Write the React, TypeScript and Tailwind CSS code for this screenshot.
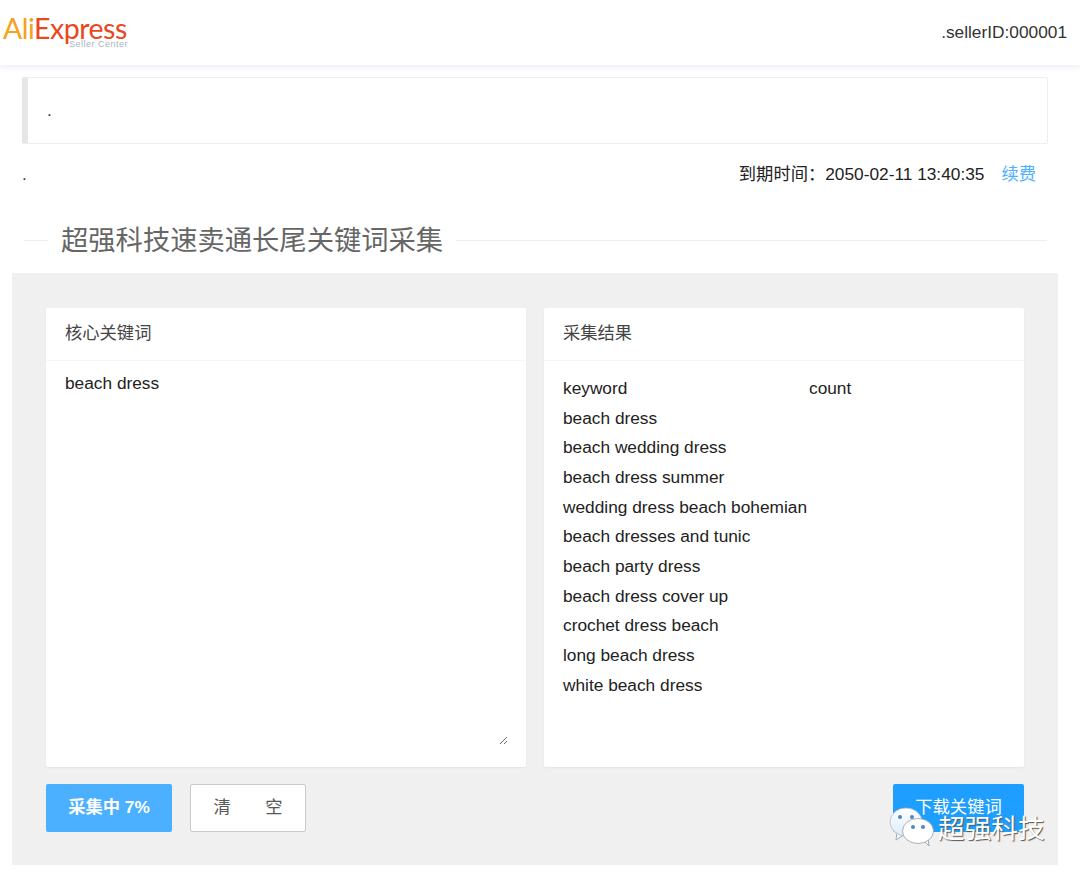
const font = '[font-family:"Liberation_Sans","Noto_Sans_CJK_SC",sans-serif]';

const keywords = [
  "beach dress",
  "beach wedding dress",
  "beach dress summer",
  "wedding dress beach bohemian",
  "beach dresses and tunic",
  "beach party dress",
  "beach dress cover up",
  "crochet dress beach",
  "long beach dress",
  "white beach dress",
];

function WechatIcon() {
  return (
    <svg width="46" height="40" viewBox="0 0 46 40">
      <defs>
        <linearGradient id="bubble" x1="0" y1="0" x2="0" y2="1">
          <stop offset="0" stopColor="#ffffff" />
          <stop offset="1" stopColor="#dcecfb" />
        </linearGradient>
      </defs>
      <path d="M8 25 L7 33 L15 28 Z" fill="#eef5fc" stroke="#9a9da2" strokeWidth="0.8" />
      <ellipse cx="17" cy="15" rx="16" ry="14" fill="url(#bubble)" stroke="#b5b8bc" strokeWidth="0.8" />
      <circle cx="11" cy="10" r="2" fill="#4a87c4" />
      <circle cx="23" cy="10" r="2" fill="#4a87c4" />
      <path d="M35 34 L40 39 L39 31 Z" fill="#ffffff" stroke="#8d9096" strokeWidth="0.8" />
      <ellipse cx="29" cy="24" rx="15.5" ry="12.5" fill="#ffffff" stroke="#9a9da2" strokeWidth="0.8" />
      <circle cx="24" cy="20" r="2" fill="#4a87c4" />
      <circle cx="34" cy="20" r="2" fill="#4a87c4" />
    </svg>
  );
}

export default function App() {
  return (
    <div className={`relative h-[877px] w-[1080px] overflow-hidden bg-white text-[17.3px] text-[#333] ${font}`}>
      <header className="flex h-[65px] items-center justify-between bg-white pl-[3px] pr-[13px] shadow-[0_2px_6px_rgba(220,222,235,0.6)]">
        <div className="relative h-[50px] w-[130px]">
          <div className="absolute left-0 top-[1px] whitespace-nowrap text-[28.5px] leading-[38px] tracking-[-0.5px] [font-family:Lato,sans-serif]">
            <span className="text-[#f7a11c]">Ali</span>
            <span className="text-[#e8481c]">Express</span>
          </div>
          <div className="absolute left-[66px] top-[30px] whitespace-nowrap text-[9px] font-normal leading-[12px] tracking-[0.5px] text-[#a9b3c2]">Seller Center</div>
        </div>
        <div>.sellerID:000001</div>
      </header>

      <div className="ml-[22px] mt-[12px] flex h-[67px] w-[1026px] items-center rounded-[2px] border border-[#eee] border-l-[6px] border-l-[#e6e6e6] pl-[19px]">
        .
      </div>

      <div className="ml-[22px] mr-[44px] mt-[17px] flex h-[28px] items-center justify-between">
        <span>.</span>
        <div className="flex items-center">
          <span className="text-[#222]">到期时间：2050-02-11 13:40:35</span>
          <a className="ml-[17px] text-[#4db0ff]">续费</a>
        </div>
      </div>

      <div className="ml-[24px] mt-[29px] flex h-[44px] w-[1023px] items-center">
        <div className="h-px w-[24px] bg-[#eee]" />
        <h2 className="px-[13px] pt-[2px] text-[27.3px] font-normal text-[#666]">超强科技速卖通长尾关键词采集</h2>
        <div className="h-px flex-1 bg-[#eee]" />
      </div>

      <main className="ml-[12px] mt-[11px] h-[592px] w-[1046px] bg-[#f0f0f0] px-[34px] pt-[35px]">
        <div className="flex gap-[18px]">
          <section className="h-[459px] w-[480px] rounded-[2px] bg-white shadow-[0_1px_2px_rgba(0,0,0,0.05)]">
            <div className="flex h-[53px] items-center border-b border-[#f6f6f6] px-[19px] text-[#444]">核心关键词</div>
            <textarea
              defaultValue="beach dress"
              className="ml-[9px] mt-[10px] h-[374px] w-[453px] resize-y px-[10px] py-[2px] text-[17.3px] leading-[20px] text-[#222] outline-none"
            />
          </section>
          <section className="h-[459px] w-[480px] rounded-[2px] bg-white shadow-[0_1px_2px_rgba(0,0,0,0.05)]">
            <div className="flex h-[53px] items-center border-b border-[#f6f6f6] px-[19px] text-[#444]">采集结果</div>
            <div className="px-[19px] pt-[13px] text-[#222]">
              <div className="flex h-[29.7px] items-center">
                <span className="w-[246px]">keyword</span>
                <span>count</span>
              </div>
              {keywords.map((k) => (
                <div key={k} className="flex h-[29.7px] items-center whitespace-nowrap">{k}</div>
              ))}
            </div>
          </section>
        </div>
        <div className="mt-[17px] flex w-[978px] items-start">
          <button className="h-[48px] w-[126px] rounded-[2px] bg-[#4bb0ff] text-[17.3px] font-bold text-white">采集中 7%</button>
          <button className="ml-[18px] h-[48px] w-[116px] rounded-[2px] border border-[#c9c9c9] bg-white text-[17.3px] text-[#555]">清　　空</button>
          <button className="ml-auto h-[48px] w-[131px] rounded-[2px] bg-[#1e9fff] text-[17.3px] text-white">下载关键词</button>
        </div>
      </main>

      <div className="absolute left-[889px] top-[807px] flex items-center">
        <WechatIcon />
        <span className="relative top-[2px] ml-[3px] whitespace-nowrap text-[26.7px] text-white [text-shadow:1px_1px_1px_#555]">超强科技</span>
      </div>
    </div>
  );
}
